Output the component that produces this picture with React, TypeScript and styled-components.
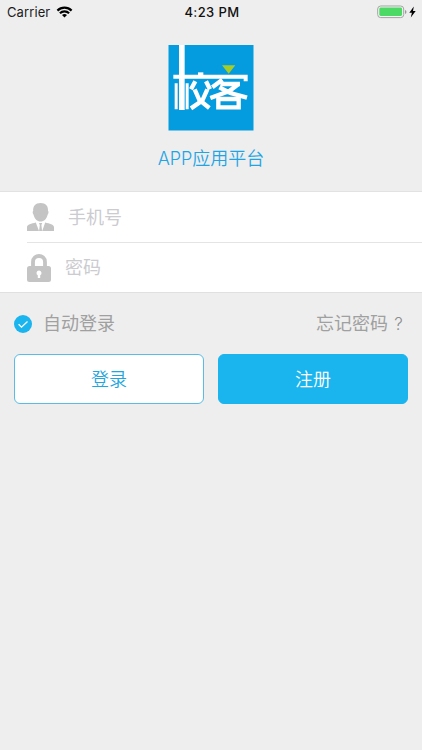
import React from 'react';
import styled, { createGlobalStyle } from 'styled-components';

const GlobalStyle = createGlobalStyle`
  * { box-sizing: border-box; }
  body { margin: 0; background: #eeeeee; }
  button, input { font: inherit; }
`;

const Screen = styled.main`
  width: 100%;
  height: 750px;
  background: #eeeeee;
  font-family: Inter, "Noto Sans CJK SC", sans-serif;
  font-size: 18px;
  font-weight: 350;
  overflow: hidden;
`;

const StatusBar = styled.header`
  display: grid;
  grid-template-columns: 1fr auto 1fr;
  height: 24px;
  padding: 0 6px 0 7px;
  align-items: center;
  font: 400 13px/24px Inter, sans-serif;
  letter-spacing: 0.1px;
  color: #1c1c1c;
`;

const StatusGroup = styled.div<{ $end?: boolean }>`
  display: flex;
  align-items: center;
  justify-content: ${(p) => (p.$end ? 'flex-end' : 'flex-start')};
  gap: ${(p) => (p.$end ? 2 : 6)}px;
`;

const Clock = styled.time`
  font-weight: 550;
  letter-spacing: 0.4px;
  padding-left: 1px;
  color: #111;
`;

const Brand = styled.section`
  display: flex;
  flex-direction: column;
  align-items: center;
  height: 168px;
  padding-top: 21px;
  border-bottom: 1px solid #e2e2e2;
`;

const BrandName = styled.h1`
  margin: 14px 0 0;
  font-size: 18px;
  font-weight: 350;
  line-height: 27px;
  color: #1fa5e4;
`;

const Fields = styled.section`
  height: 101px;
  padding-left: 27px;
  background: #fff;
  border-bottom: 1px solid #e0e0e0;
`;

const Field = styled.label<{ $divided?: boolean }>`
  display: flex;
  align-items: center;
  gap: 14px;
  height: ${(p) => (p.$divided ? 51 : 49)}px;
  border-bottom: ${(p) => (p.$divided ? '1px solid #e4e4e4' : '0')};
`;

const Input = styled.input`
  flex: 1;
  min-width: 0;
  height: 30px;
  padding: 0;
  border: 0;
  outline: 0;
  background: transparent;
  font-weight: 400;
  &::placeholder { color: #cbcbd0; opacity: 1; }
`;

const Options = styled.div`
  display: flex;
  justify-content: space-between;
  align-items: center;
  height: 61px;
  padding: 0 14px;
  font-weight: 400;
  line-height: 26px;
  color: #a0a0a0;
`;

const Remember = styled.span`
  display: flex;
  align-items: center;
  gap: 11px;
`;

const Forgot = styled.span`
  display: flex;
  align-items: baseline;
`;

const Question = styled.span`
  width: 20px;
  padding-left: 1px;
  text-align: center;
  font-size: 17px;
  font-weight: 300;
  color: #8c8c8c;
`;

const Actions = styled.div`
  display: grid;
  grid-template-columns: 1fr 1fr;
  gap: 14px;
  padding: 0 14px;
`;

const Button = styled.button<{ $primary?: boolean }>`
  height: 50px;
  padding: 0 0 2px;
  border: 1px solid ${(p) => (p.$primary ? '#1ab4ee' : '#59bce6')};
  border-radius: 6px;
  background: ${(p) => (p.$primary ? '#1ab4ee' : '#fff')};
  color: ${(p) => (p.$primary ? '#fff' : '#1fa5e0')};
`;

const WifiIcon = () => (
  <svg width="17" height="12" viewBox="0 0 16 12" fill="none" stroke="#000" strokeWidth="2.2">
    <path d="M.9 4.600a10.200 10.200 0 0 1 14.200 0M3.400 7.300a6.600 6.600 0 0 1 9.200 0" />
    <path d="M8 11.600 5.500 9.100a3.600 3.600 0 0 1 5 0Z" fill="#000" stroke="none" />
  </svg>
);

const BatteryIcon = () => (
  <svg width="30" height="14" viewBox="0 0 30 14">
    <rect x=".7" y="1" width="26" height="11.600" rx="3" fill="#f4f4f4" stroke="#a3a3a3" />
    <rect x="2.300" y="2.600" width="22.800" height="8.400" rx="1.400" fill="#4cd964" />
    <path d="M28 5v4q1.500-.6 1.500-2T28 5Z" fill="#999" />
  </svg>
);

const BoltIcon = () => (
  <svg width="7" height="12" viewBox="0 0 7 12">
    <path d="M4.800.5.3 6.800h2.600L1.800 11.400 6.700 5H4Z" fill="#000" />
  </svg>
);

const Logo = () => (
  <svg width="86" height="86" viewBox="24 21 258 258">
    <path d="M25.500 21h255v256.500h-255Z" fill="#049bdf" />
    <path d="M186 82h40l-20 25Z" fill="#a5cc27" />
    <g fill="#fff">
      <path d="M57 21h17v195H57Z" />
      <path d="M40 110h223v20h-12v-8H40Z" />
      <path d="M44 136h9v78h-9ZM77 136h9v78h-9Z" />
      <path d="M114 103h16v10h-16Z" />
    </g>
    <g fill="none" stroke="#fff" strokeWidth="13">
      <path d="M106 130 93 154M138 130 150 154M104 154 118 186 148 210M142 154 127 188 93 211" />
      <path d="M187 125 157 148M181 138H240M235 139 208 159 151 180M178 148 211 165 261 179" />
      <path d="M175 183H236V208H175Z" />
    </g>
  </svg>
);

const PersonIcon = () => (
  <svg width="27" height="28" viewBox="0 0 27 28" fill="#c4c4c4">
    <path d="M13.600 0c5.200 0 7.800 3 7.400 8 .9.2.6 2.500-.4 3.700-.9 4-3.600 6.800-7 6.800s-6.100-2.800-7-6.800c-1-1.200-1.300-3.500-.4-3.700C5.800 3 8.400 0 13.600 0Z" />
    <path d="M8.800 19.500 12 28H0v-4c0-2.500 4.500-3.300 8.800-4.500ZM18.200 19.500 15.200 28H27v-4c0-2.500-4.500-3.300-8.800-4.500Z" />
    <path d="M12 20h3.200l-.8 2 .7 6h-3l.7-6Z" />
  </svg>
);

const LockIcon = () => (
  <svg width="24" height="28" viewBox="0 0 24 28">
    <path d="M6 14V8c0-8 12-8 12 0v6" fill="none" stroke="#c4c4c4" strokeWidth="3.800" />
    <rect y="12" width="24" height="16" rx="2.500" fill="#c4c4c4" />
    <path d="M12 16.500a2.500 2.500 0 0 1 1.200 4.700V24h-2.400v-2.800A2.500 2.500 0 0 1 12 16.500Z" fill="#fff" />
  </svg>
);

const CheckIcon = () => (
  <svg width="18" height="18" viewBox="0 0 18 18">
    <circle cx="9" cy="9" r="9" fill="#1ab4ee" />
    <path d="m4.600 9.300 2.900 2.900 6-5.700" fill="none" stroke="#fff" strokeWidth="1.300" />
  </svg>
);

export default function App() {
  return (
    <Screen>
      <GlobalStyle />
      <StatusBar>
        <StatusGroup>Carrier<WifiIcon /></StatusGroup>
        <Clock>4:23 PM</Clock>
        <StatusGroup $end><BatteryIcon /><BoltIcon /></StatusGroup>
      </StatusBar>
      <Brand>
        <Logo />
        <BrandName>APP应用平台</BrandName>
      </Brand>
      <Fields>
        <Field $divided><PersonIcon /><Input type="tel" placeholder="手机号" /></Field>
        <Field><LockIcon /><Input type="password" placeholder="密码" /></Field>
      </Fields>
      <Options>
        <Remember><CheckIcon />自动登录</Remember>
        <Forgot>忘记密码<Question>?</Question></Forgot>
      </Options>
      <Actions>
        <Button>登录</Button>
        <Button $primary>注册</Button>
      </Actions>
    </Screen>
  );
}
